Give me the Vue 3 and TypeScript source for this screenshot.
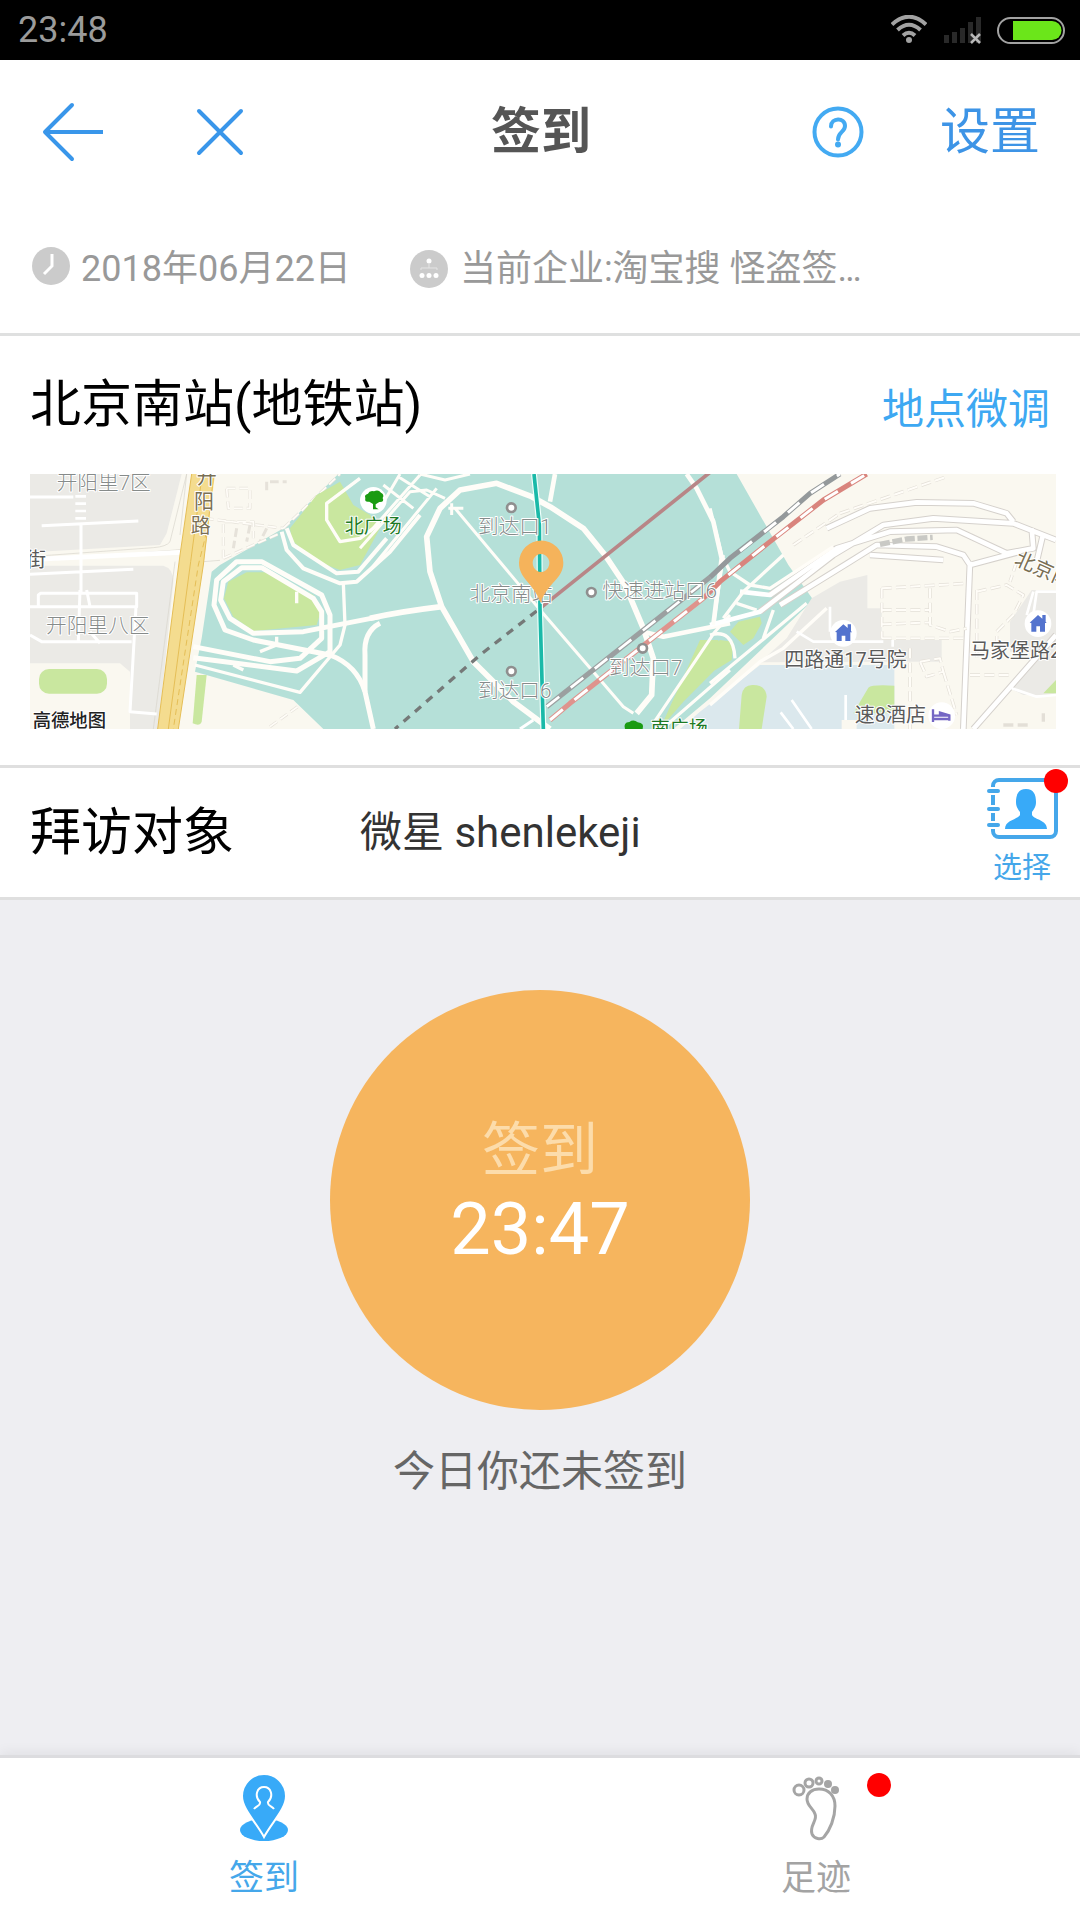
<script setup lang="ts">
import { ref } from 'vue'

interface Tab {
  id: 'checkin' | 'trace'
  label: string
  badge: boolean
}

const clock = ref('23:48')
const checkinTime = ref('23:47')
const today = ref('2018年06月22日')
const company = ref('当前企业:淘宝搜 怪盗签…')
const place = ref('北京南站(地铁站)')
const target = ref('微星 shenlekeji')
const active = ref<Tab['id']>('checkin')
const tabs: Tab[] = [
  { id: 'checkin', label: '签到', badge: false },
  { id: 'trace', label: '足迹', badge: true },
]
</script>

<template>
  <div class="screen">
    <div class="status">
      <span class="status-time">{{ clock }}</span>
      <div class="status-icons">
        <svg class="wifi" width="36" height="30" viewBox="0 0 36 30" fill="none" stroke="#a2a2a2" stroke-width="4">
          <path d="M1 9.500Q18-6 35 9.500" />
          <path d="M6.500 15Q18 4.500 29.500 15" />
          <path d="M12 20.500Q18 15 24 20.500" />
          <circle cx="18" cy="25" r="3" fill="#a2a2a2" stroke="none" />
        </svg>
        <svg class="signal" width="38" height="28" viewBox="0 0 38 28">
          <path fill="#292929" d="M1 19h5v8H1zM9 16h5v11H9zM17 12h5v15h-5zM25 6h5v21h-5zM33 1h5v26h-5z" />
          <path stroke="#b8b8b8" stroke-width="2.500" d="M28 18l9 9M37 18l-9 9" />
        </svg>
        <svg width="68" height="27" viewBox="0 0 68 27">
          <rect x="1" y="1" width="66" height="25" rx="12.500" fill="none" stroke="#a2a2a2" stroke-width="2" />
          <path fill="#6be61a" d="M16 4h39a9.500 9.500 0 0 1 0 19H16z" />
        </svg>
      </div>
    </div>

    <header class="header">
      <div class="header-side">
        <button class="icon-button" aria-label="返回">
          <svg width="62" height="60" viewBox="0 0 62 60" fill="none" stroke="#3996ea" stroke-width="4" stroke-linecap="round" stroke-linejoin="round">
            <path d="M30 3L3 30l27 27" />
            <path d="M4 30h57" stroke-linecap="butt" />
          </svg>
        </button>
        <button class="icon-button" aria-label="关闭">
          <svg width="48" height="48" viewBox="0 0 48 48" stroke="#3996ea" stroke-width="4" stroke-linecap="round">
            <path d="M3 3l42 42M45 3L3 45" />
          </svg>
        </button>
      </div>
      <h1>签到</h1>
      <div class="header-side end">
        <button class="icon-button" aria-label="帮助">
          <svg width="52" height="52" viewBox="0 0 52 52" fill="none" stroke="#43aaf2" stroke-width="4">
            <circle cx="26" cy="26" r="23.500" />
            <path d="M19 20.500c0-9 14-9.500 14-.5 0 6-7 6-7 13.500" stroke-linecap="round" />
            <circle cx="26" cy="38.500" r="3" fill="#43aaf2" stroke="none" />
          </svg>
        </button>
        <button class="settings">设置</button>
      </div>
    </header>

    <div class="meta">
      <svg class="clock-icon" width="38" height="38" viewBox="0 0 38 38">
        <circle cx="19" cy="19" r="19" fill="#cbcbcb" />
        <path d="M20 7v12l-8 8" fill="none" stroke="#fff" stroke-width="3" />
      </svg>
      <span class="date">{{ today }}</span>
      <svg width="38" height="38" viewBox="0 0 38 38">
        <circle cx="19" cy="19" r="19" fill="#cbcbcb" />
        <g fill="#fff">
          <circle cx="19" cy="11" r="2.500" />
          <circle cx="12" cy="25.500" r="2.500" />
          <circle cx="19" cy="25.500" r="2.500" />
          <circle cx="26" cy="25.500" r="2.500" />
        </g>
        <path d="M11 20v-2h16v2M19 14v4" fill="none" stroke="#e4e4e4" stroke-width="1" />
      </svg>
      <span class="company">{{ company }}</span>
    </div>

    <section class="location">
      <div class="location-head">
        <h2>{{ place }}</h2>
        <button class="adjust">地点微调</button>
      </div>
      <svg class="map" viewBox="0 0 3078 765" role="img" aria-label="地图">
        <rect width="3078" height="765" fill="#faf8f0" />

        <!-- station grounds and land areas -->
        <g transform="translate(0 -27)">
          <path fill="#b5e0d8" d="M925 27L760 190 570 300 545 320 515 520 495 620 790 705 880 792H1930L2040 700 2350 405 2275 300 2120 27z" />
          <path fill="#ebeae6" d="M0 27H455L410 205 390 240 0 262zM0 302H400Q430 310 430 350L385 792H300V620L270 595H0z" />
        </g>
        <g transform="translate(2040 -27)">
          <path fill="#ebeae6" d="M305 400L390 350 472 330V430H515V525H695V590H555L150 592 230 520zM965 375H1038V690H940L900 670 980 560H900V470z" />
          <path fill="#dbe8ed" d="M150 600H553V792H-90L-30 740z" />
          <path fill="#faf8f0" d="M395 765H440V792H395z" />
          <g fill="#c9e79f">
            <path d="M87 792L95 690Q100 658 130 660 168 660 170 695L155 792zM430 745L475 668Q485 658 553 662V745zM1000 685L1038 645V685z" />
            <path d="M60 500L85 470 150 455 155 475 130 520 100 540zM0 545L30 525 70 530 65 585 0 625zM-150 792L-30 525H25L20 610-80 710z" />
          </g>
        </g>

        <!-- west side streets -->
        <g transform="translate(-30 -27)" fill="none" stroke-linejoin="round">
          <g stroke="#d8d4cc" stroke-width="2">
            <path d="M500 27L450 230Q440 245 400 248L30 275M480 254L30 290M465 290L400 792M550 290L600 286M500 27L480 210" />
          </g>
          <g stroke="#fff" stroke-width="9">
            <path d="M30 96H160M65 182L355 168M183 175V380M30 328L340 313M55 422V390L62 385H350V425H30M180 375L175 530M200 375L210 425M335 530H65L30 510M348 425L330 740 410 747M210 500L240 535" />
          </g>
          <path stroke="#fff" stroke-width="14" d="M30 284L480 262" />
          <path stroke="#fff" stroke-width="32" stroke-dasharray="8 14" d="M182 90V170" />
          <g stroke="#e6e2da" stroke-width="9">
            <path stroke-dasharray="26 12" d="M555 160L790 190M610 280L610 170 700 170 700 220M620 70H690V130H625zM740 50V80M790 190L960 27M650 190L640 250M690 180L680 230M740 190L720 230M610 280L780 205M750 50H800M750 785L840 720" />
          </g>
          <g stroke="#fffdf8" stroke-width="5">
            <path stroke-dasharray="26 12" d="M555 160L790 190M610 280L610 170 700 170 700 220M620 70H690V130H625zM790 190L960 27M610 280L780 205M750 785L840 720" />
          </g>
        </g>

        <!-- north-south trunk road -->
        <g transform="translate(-30 -27)">
          <path fill="#f4dc8f" d="M515 27H585L550 300 475 792H413L480 270z" />
          <path fill="none" stroke="#e5be56" stroke-width="3" d="M515 27L480 270 413 792M580 40L550 300 475 792M545 40L512 290 445 792" />
          <path fill="none" stroke="#e5be56" stroke-width="3" stroke-dasharray="18 12" d="M560 200L535 300 460 792" />
        </g>

        <!-- lawns and loops west of the hall -->
        <g transform="translate(-30 -27)">
          <g fill="#c9e79f">
            <path d="M960 50L890 90 810 190 815 225 880 285 960 315 1020 300 1080 190 1050 150 1000 120z" />
            <path d="M680 322H735L880 390 905 430 890 480 700 498 640 455 612 400 625 350z" />
            <path d="M530 630H560L545 770Q540 785 518 775z" />
            <rect x="57" y="612" width="204" height="74" rx="30" />
          </g>
          <g fill="none" stroke="#fffdf8" stroke-width="15" stroke-linejoin="round">
            <path d="M520 545L750 590 840 580 905 520V440L880 400 725 308H665L610 350 602 405 630 460 700 505 850 500 1080 455" />
            <path d="M520 578L830 618 930 560V450L905 390 725 290H650L590 345 582 420 615 495 700 525 930 570Q1010 600 1035 680L1060 792" />
            <path d="M525 600L840 682 960 540 975 480 970 355" stroke-width="10" />
            <path d="M785 200L800 255 850 310 960 355 1010 350 1110 260 1200 150M800 190L820 240 950 325 1015 320 1100 220" stroke-width="12" />
            <path d="M1020 40L920 115V165L960 230 1020 220 1080 175M830 380V415M640 600L670 615M720 560L770 540V515" stroke-width="10" />
            <path d="M1080 475Q1030 500 1035 570V680" />
          </g>
        </g>

        <!-- station hall ring roads -->
        <g transform="translate(1020 -27)" fill="none" stroke-linejoin="round">
          <g stroke="#fffdf8" stroke-width="17">
            <path d="M0 460Q90 440 215 425M540 125L485 95 380 55 270 75 210 130 170 215 180 320 215 425 310 590 430 710 540 792M540 125L640 190 705 270 765 360 820 490 850 580 845 690 800 745" />
            <path d="M555 27L540 110M950 27L980 70 1030 170 1055 280 1030 480M820 500L880 515 1080 475" stroke-width="14" />
          </g>
          <g stroke="#fffdf8" stroke-width="9">
            <path d="M255 130L515 440 760 725 790 745M850 775L1035 500 1080 450M890 780L1080 615M0 315L200 70M-30 250L120 80 170 75 225 100M40 60L130 130M85 35L180 95M150 27L225 45 300 27M0 200L150 30M30 130L90 27M245 115V150M235 130H280" />
          </g>
          <path stroke="#9b9fa0" stroke-width="15" d="M530 725L1020 337" />
          <path stroke="#fff" stroke-width="8" stroke-dasharray="48 44" d="M530 725L1020 337" />
          <path stroke="#df938d" stroke-width="15" d="M540 765L600 715 720 620 1000 400" />
          <path stroke="#fff" stroke-width="9" stroke-dasharray="50 45" d="M450 792L490 765M540 765L600 715 720 620 1000 400" />
          <path stroke="#b88687" stroke-width="11" d="M510 430L1020 22" />
          <path stroke="#757978" stroke-width="10" stroke-dasharray="24 21" d="M500 438L330 570 75 792" />
          <path stroke="#effffb" stroke-width="18" d="M492 27L508 180 510 430 520 792" />
          <path stroke="#1ab9a8" stroke-width="11" d="M492 27L508 180 510 430 520 792" />
        </g>

        <!-- east side streets -->
        <g transform="translate(2040 -27)" fill="none" stroke-linejoin="round">
          <g stroke="#d5d1cc" stroke-width="20">
            <path d="M350 190L480 130 620 112 790 115 890 145 910 170M150 440L370 270 520 180 670 160 910 175 1038 225M180 390L380 250 540 200 740 195 890 265M210 420L420 290 500 240 680 245 760 270 780 300M480 270L700 285M780 300L930 260M780 290L760 792M965 190L970 250 890 265M1000 205L980 290M790 792L1038 510" />
          </g>
          <g stroke="#fff" stroke-width="14">
            <path d="M350 190L480 130 620 112 790 115 890 145 910 170M0 480L150 440 370 270 520 180 670 160 910 175 1038 225M90 380L180 390 380 250 540 200 740 195 890 265M210 420L420 290 500 240 680 245 760 270 780 300M480 270L700 285M780 300L930 260M780 290L760 792M965 190L970 250 890 265M1000 205L980 290M790 792L1038 510" />
          </g>
          <g stroke="#fffdf8" stroke-width="12">
            <path d="M0 130L35 270 60 320 120 360 180 370 370 245M40 270L10 480M40 460L100 380 220 270M80 415L140 435M0 655L290 415M0 510Q70 490 75 580M190 435L160 520M0 720L150 590 220 550 350 430" stroke-width="10" />
          </g>
          <g stroke="#fff" stroke-width="8">
            <path d="M360 425V500M260 500L310 530H520M245 705L305 792M212 742L250 792M407 690V765M548 525V545M905 670L980 695 1038 690M970 450L980 380H1038M950 450L970 380" />
          </g>
          <g stroke="#e3dfd7" stroke-width="10">
            <path stroke-dasharray="30 13" d="M515 370L770 355M515 370V520M515 435H660M515 478L660 472M660 370V480L720 500 770 490M515 520H760M800 375V590M800 380L890 360 940 390 910 450 860 500V570M780 630H900M630 590L690 580 700 620 650 635zM600 550V792M920 290L900 350M390 145L710 35M250 240L390 145M700 620L740 750M880 780H960M1000 745V770" />
          </g>
          <g stroke="#fffdf8" stroke-width="6">
            <path stroke-dasharray="30 13" d="M515 370L770 355M515 370V520M515 435H660M515 478L660 472M660 370V480L720 500 770 490M515 520H760M800 375V590M800 380L890 360 940 390 910 450 860 500V570M780 630H900M630 590L690 580 700 620 650 635zM600 550V792M920 290L900 350M390 145L710 35M250 240L390 145M700 620L740 750" />
          </g>
          <path stroke="#c9c9c5" stroke-width="16" stroke-dasharray="30 8" d="M510 238L590 222 668 217" />
          <path stroke="#94999b" stroke-width="15" d="M0 337L60 280 220 155 300 85 390 27" />
          <path stroke="#fff" stroke-width="9" stroke-dasharray="46 46" d="M90 258L220 155 300 85 390 27" />
          <path stroke="#d9847d" stroke-width="15" d="M-20 400L30 350 180 230 340 105 470 27" />
          <path stroke="#fff" stroke-width="9" stroke-dasharray="46 46" d="M55 330L180 230 340 105 470 27" />
        </g>

        <!-- points of interest -->
        <g fill="#fff" stroke="#8f8f8f" stroke-width="8">
          <circle cx="1444" cy="101" r="13" />
          <circle cx="1684" cy="355" r="13" />
          <circle cx="1838" cy="523" r="13" />
          <circle cx="1444" cy="592" r="13" />
        </g>
        <g fill="#fff">
          <circle cx="1030" cy="79" r="40" />
          <circle cx="2440" cy="478" r="40" />
          <circle cx="3024" cy="449" r="40" />
          <circle cx="2735" cy="725" r="40" />
        </g>
        <path fill="#1a9b12" d="M1029 106V90L1018 83Q1003 86 1006 72 1002 62 1014 59 1018 49 1032 52 1045 46 1053 56 1064 62 1058 72 1064 85 1048 84L1037 91V100L1046 106H1018z" />
        <path fill="#1a9b12" d="M1785 765Q1779 745 1798 744 1811 735 1823 745 1844 747 1838 765z" />
        <g fill="#5373ce">
          <path d="M2415 474L2440 451 2453 462V451H2463V471L2466 475H2461V501H2446V485H2435V501H2420V475z" />
          <path d="M2999 446L3024 423 3037 434V423H3047V443L3050 447H3045V473H3030V457H3019V473H3004V447z" />
        </g>
        <path fill="none" stroke="#7466c4" stroke-width="7" d="M2709 706V744M2709 725H2758M2758 740V724L2730 716V725M2709 735H2758" />

        <g class="labels">
          <g class="muted">
            <text x="80" y="47">开阳里7区</text>
            <text x="48" y="478">开阳里八区</text>
            <text x="1344" y="181">到达口1</text>
            <text x="1319" y="382">北京南站</text>
            <text x="1717" y="372">快速进站口6</text>
            <text x="1737" y="604">到达口7</text>
            <text x="1344" y="673">到达口6</text>
          </g>
          <g class="dark">
            <text x="-12" y="280">街</text>
            <text x="2263" y="580">四路通17号院</text>
            <text x="2820" y="553">马家堡路2</text>
            <text x="2474" y="743">速8酒店</text>
          </g>
          <g class="road">
            <text x="500" y="31">开</text>
            <text x="492" y="104">阳</text>
            <text x="482" y="177">路</text>
            <text x="2950" y="270" transform="rotate(24 2950 270)">北京南</text>
          </g>
          <g class="park">
            <text x="944" y="178">北广场</text>
            <text x="1862" y="783">南广场</text>
          </g>
          <text class="brand" x="8" y="758">高德地图</text>
        </g>

        <path fill="#f5b35b" fill-rule="evenodd" d="M1532 386C1510 325 1467 315 1467 266A66 66 0 0 1 1600 266C1600 315 1553 325 1532 386zM1533 240a25 27 0 1 0 .1 0z" />
      </svg>
    </section>

    <section class="visit">
      <label for="visit-target">拜访对象</label>
      <input id="visit-target" v-model="target" type="text" />
      <button class="choose">
        <span class="choose-icon">
          <svg width="72" height="62" viewBox="0 0 72 62">
            <rect x="7" y="3" width="63" height="57" rx="6" fill="none" stroke="#45a7ea" stroke-width="4" />
            <path stroke="#fff" stroke-width="8" d="M0 14H15M0 32H15M0 48H15" />
            <path stroke="#45a7ea" stroke-width="4" stroke-linecap="round" d="M3 14H12M3 32H12M3 48H12" />
            <path fill="#38aaf8" d="M40 12c-8 0-10 6-10 13 0 5 2 7 4 10v3c-3 5-15 5-15 14h42c0-9-12-9-15-14v-3c2-3 4-5 4-10 0-7-2-13-10-13z" />
          </svg>
          <i class="dot"></i>
        </span>
        <span>选择</span>
      </button>
    </section>

    <main class="body">
      <button class="checkin">
        <span class="checkin-label">签到</span>
        <span class="checkin-time">{{ checkinTime }}</span>
      </button>
      <p>今日你还未签到</p>
    </main>

    <nav class="tabs">
      <button
        v-for="tab in tabs"
        :key="tab.id"
        class="tab"
        :class="{ active: active === tab.id }"
        @click="active = tab.id"
      >
        <span class="tab-icon">
          <svg v-if="tab.id === 'checkin'" width="48" height="66" viewBox="0 0 48 66">
            <ellipse cx="24" cy="55" rx="24" ry="11" fill="#38aaf8" />
            <path fill="#38aaf8" stroke="#fff" stroke-width="2" d="M24 62C16 47 2 34 2 21a22 22 0 0 1 44 0C46 34 32 47 24 62z" />
            <path fill="none" stroke="#fff" stroke-width="2" d="M14 34c2-3 7-3 6-7-6-6-3-15 4-15s10 9 4 15c-1 4 4 4 6 7" />
          </svg>
          <svg v-else width="48" height="66" viewBox="0 0 48 66" fill="none" stroke="#a5a5a5">
            <path stroke-width="3" d="M27 14c10 0 16 7 16 17 0 12-5 24-11 31-3 3-10 2-12-3-3-8 6-14 3-20-2-6-8-8-8-15 0-6 5-10 12-10z" />
            <circle cx="7" cy="15" r="5" stroke-width="3" />
            <circle cx="17" cy="8" r="4" stroke-width="3" />
            <circle cx="27" cy="6" r="3" stroke-width="3" />
            <circle cx="36" cy="9" r="4" fill="#a5a5a5" stroke="none" />
            <circle cx="43" cy="15" r="4" fill="#a5a5a5" stroke="none" />
          </svg>
          <i v-if="tab.badge" class="dot"></i>
        </span>
        <span>{{ tab.label }}</span>
      </button>
    </nav>
  </div>
</template>

<style>
body {
  margin: 0;
}
</style>

<style scoped>
.screen {
  display: flex;
  flex-direction: column;
  min-height: 100vh;
  background: #eeeef2;
  font-family: Roboto, 'Noto Sans CJK SC', sans-serif;
  color: #000;
}

button {
  padding: 0;
  border: 0;
  background: none;
  font: inherit;
  color: inherit;
}

svg {
  display: block;
}

h1,
h2,
p {
  margin: 0;
}

.status {
  display: flex;
  align-items: center;
  justify-content: space-between;
  height: 60px;
  padding: 0 15px 0 18px;
  background: #000;
  color: #9b9b9b;
  font-size: 36px;
}

.status-icons {
  display: flex;
  align-items: center;
  gap: 16px;
}

.header {
  display: flex;
  align-items: center;
  height: 144px;
  padding: 0 40px;
  background: #fff;
  line-height: 60px;
}

.header-side {
  display: flex;
  flex: 1;
  align-items: center;
  gap: 92px;
  padding-left: 2px;
}

.header-side.end {
  justify-content: flex-end;
  gap: 76px;
  padding-left: 0;
}

h1 {
  font-size: 50px;
  font-weight: 700;
  color: #555;
}

.settings {
  font-size: 50px;
  color: #3d94e6;
}

.meta {
  display: flex;
  align-items: center;
  height: 129px;
  padding: 0 32px;
  border-bottom: 3px solid #dfe0e0;
  background: #fff;
  color: #999;
  font-size: 36px;
  line-height: 48px;
  white-space: nowrap;
}

.clock-icon {
  margin-bottom: 6px;
}

.date {
  margin: 0 59px 0 11px;
}

.company {
  margin-left: 12px;
}

.location {
  padding: 0 24px 36px 30px;
  border-bottom: 3px solid #dfdfdf;
  background: #fff;
}

.location-head {
  display: flex;
  align-items: center;
  justify-content: space-between;
  height: 138px;
  padding-right: 6px;
}

h2 {
  font-size: 51px;
  font-weight: 400;
  line-height: 60px;
}

.adjust {
  color: #3da8f2;
  font-size: 42px;
}

.map {
  width: 100%;
}

.labels {
  font-size: 60px;
  paint-order: stroke;
  stroke: #fff;
  stroke-width: 6px;
  stroke-linejoin: round;
}

.muted {
  fill: #868b8a;
  font-size: 62px;
  font-weight: 300;
}

.dark {
  fill: #5a5a5a;
}

.road {
  fill: #7a6f54;
}

.park {
  fill: #1d7a25;
  font-size: 57px;
}

.brand {
  fill: #222;
  font-size: 55px;
  font-weight: 500;
}

.visit {
  display: flex;
  align-items: center;
  height: 129px;
  padding: 0 22px 0 30px;
  border-bottom: 3px solid #dfdfdf;
  background: #fff;
  line-height: 60px;
}

.visit label {
  width: 330px;
  font-size: 51px;
}

.visit input {
  flex: 1;
  min-width: 0;
  height: 60px;
  padding: 0;
  border: 0;
  background: none;
  color: #333;
  font: inherit;
  font-size: 42px;
}

.choose {
  display: flex;
  flex-direction: column;
  align-items: center;
  gap: 9px;
  color: #45a7ea;
  font-size: 29px;
  line-height: 40px;
}

.choose-icon,
.tab-icon {
  position: relative;
}

.dot {
  position: absolute;
  width: 24px;
  height: 24px;
  border-radius: 50%;
  background: #f00;
}

.choose-icon .dot {
  top: -8px;
  right: -10px;
}

.body {
  display: flex;
  flex: 1;
  flex-direction: column;
  align-items: center;
  padding: 90px 0 60px;
}

.checkin {
  display: flex;
  flex-direction: column;
  align-items: center;
  justify-content: center;
  width: 420px;
  height: 420px;
  padding-bottom: 20px;
  border-radius: 50%;
  background: #f6b55e;
  line-height: 80px;
}

.checkin-label {
  color: #fcdcab;
  font-size: 58px;
}

.checkin-time {
  color: #fff;
  font-size: 72px;
}

.body p {
  margin-top: 32px;
  color: #666;
  font-size: 42px;
  line-height: 60px;
}

.tabs {
  display: flex;
  gap: 24px;
  border-top: 3px solid #dcdcdf;
  background: #fff;
  box-shadow: 0 -3px 12px rgba(0, 0, 0, 0.06);
}

.tab {
  display: flex;
  flex: 1;
  flex-direction: column;
  align-items: center;
  gap: 14px;
  padding: 17px 0;
  color: #a3a3a3;
  font-size: 35px;
  line-height: 48px;
}

.tab.active {
  color: #45a7ea;
}

.tab-icon .dot {
  top: -2px;
  right: -51px;
}
</style>
